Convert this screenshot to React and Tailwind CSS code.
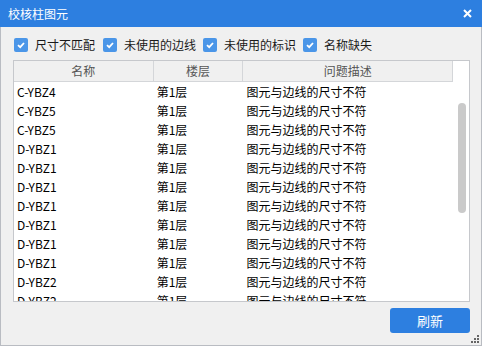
const font = { fontFamily: '"Microsoft YaHei", "Noto Sans CJK SC", "Noto Sans", sans-serif' };

const filters = [
  { label: '尺寸不匹配', w: 'w-[89px]' },
  { label: '未使用的边线', w: 'w-[100px]' },
  { label: '未使用的标识', w: 'w-[100px]' },
  { label: '名称缺失', w: 'w-auto' },
];

const rows = [
  'C-YBZ4', 'C-YBZ5', 'C-YBZ5',
  'D-YBZ1', 'D-YBZ1', 'D-YBZ1', 'D-YBZ1', 'D-YBZ1', 'D-YBZ1', 'D-YBZ1',
  'D-YBZ2', 'D-YBZ2',
];

function Checkbox() {
  return (
    <span className="flex h-[14px] w-[14px] items-center justify-center rounded-[2px] bg-[#4b96e8]">
      <svg width="10" height="10" viewBox="0 0 10 10">
        <path d="M2 5.2 L4.2 7.2 L8 3" fill="none" stroke="white" strokeWidth="1.8" />
      </svg>
    </span>
  );
}

export default function App() {
  return (
    <div className="flex h-[346px] w-[482px] flex-col bg-[#f0f0f0] text-[12px]" style={font}>
      {/* title bar */}
      <div className="flex h-[27px] shrink-0 items-center justify-between bg-[#2d7fe0] pl-[8px] pr-[10px] text-white">
        <span>校核柱图元</span>
        <svg width="9" height="9" viewBox="0 0 9 9">
          <path d="M1 1 L8 8 M8 1 L1 8" stroke="white" strokeWidth="2" />
        </svg>
      </div>

      <div className="flex flex-1 flex-col border-x border-b border-[#b9bcc2] pl-[12px] pr-[11px]">
        {/* filters */}
        <div className="mt-[11px] flex h-[14px] items-center pl-[1px]">
          {filters.map(f => (
            <label key={f.label} className={`flex items-center gap-[7px] ${f.w} text-[#1a1a1a]`}>
              <Checkbox />
              <span className="leading-none">{f.label}</span>
            </label>
          ))}
        </div>

        {/* table */}
        <div className="mt-[8px] flex h-[242px] overflow-hidden border border-[#c6c8cc] bg-white">
          <div className="flex-1 overflow-hidden">
            <div className="flex h-[21px] border-b border-[#d4d6d9] bg-[#f0f0f0] text-[#555]">
              <div className="flex w-[140px] items-center justify-center border-r border-[#d4d6d9]">名称</div>
              <div className="flex w-[90px] items-center justify-center border-r border-[#d4d6d9]">楼层</div>
              <div className="flex w-[210px] items-center justify-center border-r border-[#d4d6d9]">问题描述</div>
            </div>
            {rows.map((name, i) => (
              <div key={i} className="flex h-[19px] items-center text-black">
                <div className="w-[140px] pl-[3px]">{name}</div>
                <div className="w-[90px] pl-[3px]">第1层</div>
                <div className="w-[210px] pl-[3px]">图元与边线的尺寸不符</div>
              </div>
            ))}
          </div>
          <div className="w-[16px] shrink-0 pl-[5px] pt-[42px]">
            <div className="h-[110px] w-[8px] rounded-full bg-[#cacaca]" />
          </div>
        </div>

        {/* footer */}
        <div className="mt-[6px] flex justify-end">
          <button className="flex h-[25px] w-[80px] items-center justify-center rounded-[3px] bg-[#2d7fe0] text-[13px] text-white">
            刷新
          </button>
        </div>
        <div className="flex flex-1 items-end justify-end pb-[1px] pr-[-10px]">
          <svg width="9" height="9" viewBox="0 0 9 9" className="mr-[-10px]">
            <rect x="6" y="0" width="2" height="2" fill="#666" />
            <rect x="3" y="3" width="2" height="2" fill="#666" />
            <rect x="6" y="3" width="2" height="2" fill="#666" />
            <rect x="0" y="6" width="2" height="2" fill="#666" />
            <rect x="3" y="6" width="2" height="2" fill="#666" />
            <rect x="6" y="6" width="2" height="2" fill="#666" />
          </svg>
        </div>
      </div>
    </div>
  );
}
